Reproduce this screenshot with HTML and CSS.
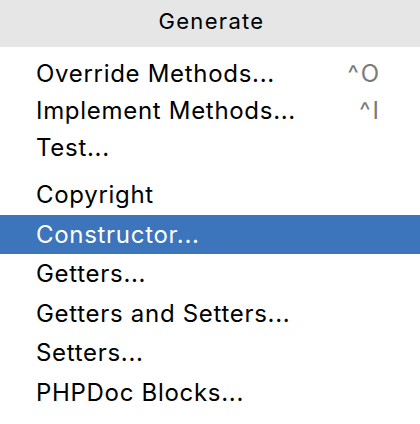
FILE: index.html
```html
<!DOCTYPE html>
<html>
<head>
<meta charset="utf-8">
<link rel="stylesheet" href="styles.css">
</head>
<body>
<div class="popup">
  <div class="header">Generate</div>
  <div class="list">
    <div class="group first">
      <div class="item"><span class="label">Override Methods...</span><span class="shortcut">^O</span></div>
      <div class="item"><span class="label">Implement Methods...</span><span class="shortcut">^I</span></div>
      <div class="item"><span class="label">Test...</span></div>
    </div>
    <div class="group second">
      <div class="item"><span class="label">Copyright</span></div>
      <div class="item selected"><span class="label">Constructor...</span></div>
      <div class="item"><span class="label">Getters...</span></div>
      <div class="item"><span class="label">Getters and Setters...</span></div>
      <div class="item"><span class="label">Setters...</span></div>
      <div class="item"><span class="label">PHPDoc Blocks...</span></div>
    </div>
  </div>
</div>
</body>
</html>
```
FILE: styles.css
```css
html, body {
  margin: 0;
  padding: 0;
  background: #ffffff;
}
body {
  font-family: Inter, "Noto Sans", "Liberation Sans", sans-serif;
  color: #000000;
  width: 420px;
  height: 424px;
  overflow: hidden;
}
.popup {
  display: flex;
  flex-direction: column;
}
.header {
  height: 47px;
  background: #e6e6e6;
  font-size: 22px;
  letter-spacing: 1.3px;
  line-height: 42px;
  text-align: center;
  padding-left: 3px;
  box-sizing: border-box;
}
.list {
  padding-top: 8px;
  display: flex;
  flex-direction: column;
  gap: 9px;
}
.group {
  display: flex;
  flex-direction: column;
}
.item {
  display: flex;
  justify-content: space-between;
  align-items: center;
  padding: 0 39px 0 36px;
  font-size: 24px;
  letter-spacing: 0.7px;
}
.first .item {
  height: 37px;
  line-height: 37px;
}
.second .item {
  height: 39.5px;
  line-height: 39.5px;
}
.selected {
  background: #3c75bc;
  color: #ffffff;
}
.shortcut {
  color: #7a7a7a;
  font-size: 24px;
  letter-spacing: 2px;
}
```
